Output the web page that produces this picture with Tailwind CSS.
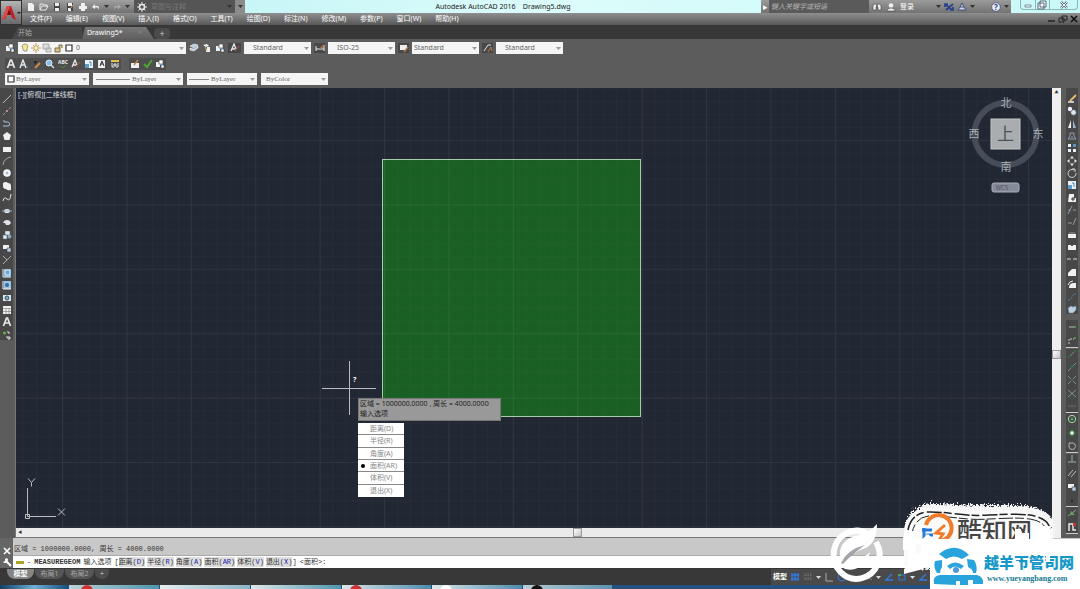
<!DOCTYPE html>
<html lang="zh-CN">
  <head>
    <meta charset="utf-8" />
    <meta name="viewport" content="width=device-width, initial-scale=1" />
    <title>Autodesk AutoCAD 2016 Drawing5.dwg</title>
    <script src="https://cdn.jsdelivr.net/npm/@tailwindcss/browser@4"></script>
  </head>
  <body
    class="relative flex h-screen flex-col overflow-hidden bg-[#5c5c5c] font-['Noto_Sans','Noto_Sans_CJK_SC',sans-serif] text-[7px] leading-[10px] text-gray-200"
  >
    <!-- title bar and menus -->
    <header class="flex h-[25px] shrink-0 bg-[#777]">
      <button
        aria-label="Application menu"
        class="flex w-[22px] shrink-0 items-center border border-[#333] bg-linear-to-b from-[#b5b5b5] to-[#6a6a6a]"
      >
        <svg class="h-[18px] w-4" viewBox="0 0 16 18">
          <path d="M1 16 6 2h4l5 14-4-2-1-3H6l-1 3z" fill="#bd2128" />
          <path d="M6 2h3l-2 9-6 5z" fill="#df4a45" />
          <path d="m8 5 2 6H6z" fill="#7b0d14" />
        </svg>
        <svg class="size-1" viewBox="0 0 4 4"><path d="M0 1h4L2 3z" fill="#222" /></svg>
      </button>
      <div class="flex min-w-0 flex-1 flex-col">
        <div class="flex h-[13px] bg-linear-to-r from-[#b9f1f4] via-[#dcfcfb] to-[#c9f9f8]">
          <div
            class="flex w-[112px] items-center justify-between bg-linear-to-b from-[#a0a0a0] to-[#717171] px-1"
            data-icons="new open save saveas print undo caret redo caret"
          ></div>
          <div class="flex w-[101px] items-center gap-1 bg-[#555] px-[3px] text-[#777]">
            <span data-icons="gear" class="flex"></span>
            <span class="flex-1">草图与注释</span>
            <span data-icons="caret" class="flex"></span>
          </div>
          <div class="flex w-[10px] items-center justify-center bg-[#8b8b8b]" data-icons="caret"></div>
          <h1 class="min-w-0 flex-1 whitespace-pre text-center leading-[13px] text-[#222]">Autodesk AutoCAD 2016    Drawing5.dwg</h1>
          <div class="flex w-[250px] items-center bg-linear-to-b from-[#9b9b9b] to-[#737373]">
            <span class="w-2 text-center text-[5px] text-white">▶</span>
            <input
              aria-label="搜索"
              placeholder="键入关键字或短语"
              class="h-full w-[100px] bg-[#5a5a5a] px-[2px] text-[7px] italic placeholder:text-[#b5b5b5]"
            />
            <div class="flex flex-1 items-center gap-1 px-[3px]">
              <span data-icons="find user" class="flex gap-1"></span>
              <button class="text-white">登录</button>
            </div>
            <div class="flex items-center gap-[3px] pr-[2px]" data-icons="caret exchange a360 caret blank help caret"></div>
          </div>
          <div class="flex w-[69px] items-start justify-end pr-[2px]">
            <div class="flex h-[10px] w-[58px] divide-x divide-[#8fb5bb] rounded-b border border-t-0 border-[#8fb5bb]">
              <button aria-label="Minimize" class="flex flex-1 items-center justify-center" data-icons="winmin"></button>
              <button aria-label="Restore" class="flex flex-1 items-center justify-center" data-icons="winmax"></button>
              <button aria-label="Close" class="flex flex-[2] items-center justify-center" data-icons="winclose"></button>
            </div>
          </div>
        </div>
        <nav class="flex h-3 items-center bg-linear-to-b from-[#8f8f8f] to-[#585858] pl-px text-white">
          <a href="#" class="px-[7px]">文件(F)</a>
          <a href="#" class="px-[7px]">编辑(E)</a>
          <a href="#" class="px-[7px]">视图(V)</a>
          <a href="#" class="px-[7px]">插入(I)</a>
          <a href="#" class="px-[7px]">格式(O)</a>
          <a href="#" class="px-[7px]">工具(T)</a>
          <a href="#" class="px-[7px]">绘图(D)</a>
          <a href="#" class="px-[7px]">标注(N)</a>
          <a href="#" class="px-[7px]">修改(M)</a>
          <a href="#" class="px-[7px]">参数(P)</a>
          <a href="#" class="px-[7px]">窗口(W)</a>
          <a href="#" class="px-[7px]">帮助(H)</a>
          <div class="ml-auto flex gap-px pr-px" data-icons="docmin docmax docclose"></div>
        </nav>
      </div>
    </header>

    <!-- drawing tabs -->
    <div class="flex h-[14px] shrink-0 items-end bg-[#383838] pl-3">
      <a href="#" class="flex h-3 w-[70px] items-center bg-[#484848] pl-[6px] text-[#aaa] [clip-path:polygon(6px_0,100%_0,100%_100%,0_100%)]">开始</a>
      <a
        href="#"
        class="flex h-3 w-[72px] items-center justify-between bg-linear-to-b from-[#777] to-[#606060] pl-[5px] pr-3 text-white [clip-path:polygon(3px_0,64px_0,100%_100%,0_100%)]"
        >Drawing5* <span class="text-[#8d8d8d]">×</span></a
      >
      <button class="h-[11px] w-4 rounded bg-[#4b4b4b] text-[9px] leading-[11px] text-[#ccc]" aria-label="新图形">+</button>
    </div>

    <!-- toolbars -->
    <section class="flex h-[49px] shrink-0 flex-col gap-[3px] pt-[3px] text-[#666]">
      <div class="flex h-3 items-center gap-[3px] pl-1">
        <span class="flex w-[11px] justify-center" data-icons="layers"></span>
        <div class="flex h-full w-[168px] items-center gap-px bg-[#f5f5f5] px-[2px]">
          <span class="flex gap-px" data-icons="bulb sun freeze unlock swatch"></span>
          <label class="relative flex flex-1 items-center">
            <select aria-label="图层" class="w-full appearance-none pl-px"><option>0</option></select>
            <span class="pointer-events-none absolute right-0" data-icons="dcaret"></span>
          </label>
        </div>
        <span class="flex gap-[3px]" data-icons="layer2 layer3 layers"></span>
        <span class="flex w-[13px] justify-center bg-[#484848]" data-icons="astyle"></span>
        <label class="relative flex h-full w-[67px] items-center bg-[#f5f5f5]">
          <select aria-label="文字样式" class="w-full appearance-none pl-[9px]"><option>Standard</option></select>
          <span class="pointer-events-none absolute right-[2px]" data-icons="dcaret"></span>
        </label>
        <span class="flex w-[11px] justify-center bg-[#484848]" data-icons="dim"></span>
        <label class="relative flex h-full w-[67px] items-center bg-[#f5f5f5]">
          <select aria-label="标注样式" class="w-full appearance-none pl-[9px]"><option>ISO-25</option></select>
          <span class="pointer-events-none absolute right-[2px]" data-icons="dcaret"></span>
        </label>
        <span class="flex w-[11px] justify-center bg-[#484848]" data-icons="tablestyle"></span>
        <label class="relative flex h-full w-[67px] items-center bg-[#f5f5f5]">
          <select aria-label="表格样式" class="w-full appearance-none pl-[2px]"><option>Standard</option></select>
          <span class="pointer-events-none absolute right-[2px]" data-icons="dcaret"></span>
        </label>
        <span class="flex w-[11px] justify-center bg-[#484848]" data-icons="mleader"></span>
        <label class="relative flex h-full w-[67px] items-center bg-[#f5f5f5]">
          <select aria-label="多重引线样式" class="w-full appearance-none pl-[9px]"><option>Standard</option></select>
          <span class="pointer-events-none absolute right-[2px]" data-icons="dcaret"></span>
        </label>
      </div>
      <div class="flex h-[13px] items-center gap-2 pl-[5px]">
        <div class="flex w-[116px] justify-between bg-[#4e4e4e] p-px" data-icons="bigA mtext brush zoom abc astyle scale justify convert"></div>
        <div class="flex w-[37px] justify-between bg-[#4e4e4e] p-px" data-icons="refedit check layers"></div>
      </div>
      <div class="flex h-3 items-center gap-1 pl-[5px] font-['Liberation_Serif',serif]">
        <label class="relative flex h-full w-[84px] items-center bg-[#f5f5f5] pl-px">
          <span data-icons="swatch" class="flex"></span>
          <select aria-label="颜色" class="flex-1 appearance-none"><option>ByLayer</option></select>
          <span class="pointer-events-none absolute right-[2px]" data-icons="dcaret"></span>
        </label>
        <label class="relative flex h-full w-[90px] items-center bg-[#f5f5f5] pl-[3px]">
          <span class="h-px w-[34px] bg-[#888]"></span>
          <select aria-label="线型" class="flex-1 appearance-none pl-[2px]"><option>ByLayer</option></select>
          <span class="pointer-events-none absolute right-[2px]" data-icons="dcaret"></span>
        </label>
        <label class="relative flex h-full w-[70px] items-center bg-[#f5f5f5] pl-[2px]">
          <span class="h-px w-5 bg-[#888]"></span>
          <select aria-label="线宽" class="flex-1 appearance-none pl-[2px]"><option>ByLayer</option></select>
          <span class="pointer-events-none absolute right-[2px]" data-icons="dcaret"></span>
        </label>
        <label class="relative flex h-full w-[67px] items-center bg-[#f5f5f5]">
          <select aria-label="打印样式" class="w-full appearance-none pl-[5px]"><option>ByColor</option></select>
          <span class="pointer-events-none absolute right-[2px]" data-icons="dcaret"></span>
        </label>
      </div>
    </section>

    <main class="flex min-h-0 flex-1">
      <!-- draw toolbar -->
      <aside class="w-4 shrink-0 border-r border-[#777]">
        <div
          class="mr-[2px] flex h-[252px] flex-col items-center justify-between bg-[#484848] pt-[6px]"
          data-icons="line xline pline polygon rect arc circle revcloud spline ellipse earc insert block point hatch gradient region table bigA addsel"
        ></div>
      </aside>

      <div class="flex min-w-0 flex-1 flex-col">
        <div class="relative flex-1 overflow-hidden bg-[#212833]">
          <svg class="absolute inset-0 size-full">
            <defs>
              <pattern id="minor" width="12.88" height="12.88" patternUnits="userSpaceOnUse" x="46" y="52">
                <path d="M.5 0v13M0 .5h13" stroke="#fff" stroke-opacity=".02" />
              </pattern>
              <pattern id="major" width="64.4" height="64.4" patternUnits="userSpaceOnUse" x="46" y="52">
                <path d="M.5 0v65M0 .5h65" stroke="#fff" stroke-opacity=".045" />
              </pattern>
            </defs>
            <rect x="366.5" y="71.5" width="258" height="257" fill="#1a5f23" stroke="#a3cda5" />
            <rect width="100%" height="100%" fill="url(#minor)" />
            <rect width="100%" height="100%" fill="url(#major)" />
            <!-- crosshair -->
            <path d="M306 300.5h54M333.5 273v54" stroke="#b9bcc1" />
            <!-- UCS icon -->
            <path d="M11.5 400v28.500H40M9.500 426.500h4v4h-4zM12 390.500l3.500 4 3.500-4M15.500 394.500v4M42 420.500l7 7M49 420.500l-7 7" fill="none" stroke="#b9bcc1" />
          </svg>
          <p class="absolute left-[2px] top-[2px] text-[#ddd]">[-][俯视][二维线框]</p>
          <span class="absolute left-[337px] top-[287px] font-bold text-white">?</span>
          <div class="absolute left-[342px] top-[310px] w-[143px] border border-[#777] bg-[#999] px-px pb-px text-[#222]">
            <p class="whitespace-nowrap">区域 = 1000000.0000 , 周长 = 4000.0000</p>
            <p>输入选项</p>
          </div>
          <div class="absolute left-[342px] top-[335px] grid h-[74px] w-[46px] grid-rows-6 divide-y divide-[#888] bg-white text-[#888]">
            <button class="pl-3 text-left leading-none">距离(D)</button>
            <button class="pl-3 text-left leading-none">半径(R)</button>
            <button class="pl-3 text-left leading-none">角度(A)</button>
            <button class="flex items-center gap-[5px] whitespace-nowrap pl-[3px] leading-none"><span class="size-1 rounded-full bg-black"></span>面积(AR)</button>
            <button class="pl-3 text-left leading-none">体积(V)</button>
            <button class="pl-3 text-left leading-none">退出(X)</button>
          </div>
          <!-- view cube -->
          <svg class="absolute right-1 top-1 h-[104px] w-[84px] font-['Noto_Sans_CJK_SC',sans-serif]" viewBox="0 0 84 104" text-anchor="middle">
            <circle cx="41.500" cy="42" r="31" fill="none" stroke="#474c59" stroke-width="6" />
            <rect x="27" y="27" width="29" height="30" fill="#a9adaf" stroke="#c2c5c6" />
            <text x="41.500" y="48" font-size="17" fill="#4b5359">上</text>
            <g font-size="11" fill="#a9adb3">
              <text x="42" y="15">北</text>
              <text x="42" y="79">南</text>
              <text x="10" y="46">西</text>
              <text x="74" y="46">东</text>
            </g>
            <rect x="28" y="91" width="27" height="9" rx="2" fill="#858b99" stroke="#a9aeb8" />
            <text x="38" y="98" font-size="6" fill="#4d525e">WCS</text>
          </svg>
        </div>
        <div class="flex h-[10px] items-center border-b border-[#777] bg-[#ebebeb]">
          <span class="w-2 text-center text-[4px] text-[#333]">◀</span>
          <span class="ml-[53%] size-[9px] border border-[#999] bg-linear-to-br from-white to-[#c5c5c5]"></span>
        </div>
      </div>

      <div class="flex w-[9px] shrink-0 flex-col items-center bg-[#efefef]">
        <span class="text-[4px] leading-[9px] text-[#333]">▲</span>
        <span class="mt-[253px] h-[9px] w-full border border-[#999] bg-linear-to-br from-white to-[#c5c5c5]"></span>
      </div>

      <!-- modify, object snap -->
      <aside class="flex w-[19px] shrink-0 flex-col pl-[5px] pr-[2px]">
        <div
          class="flex h-[226px] flex-col items-center justify-between bg-[#484848] pt-[6px]"
          data-icons="erase copy mirror offset array move rotate scale stretch trim extend break1 break2 join chamfer fillet blend explode"
        ></div>
        <div class="mt-[6px] flex h-[28px] flex-col items-center justify-between border-b border-[#ccc] bg-[#484848] py-[2px]" data-icons="track from"></div>
        <div class="mt-px flex h-[63px] flex-col items-center justify-between bg-[#484848] pb-px" data-icons="endp midp isect appint ext"></div>
        <div class="flex h-[41px] flex-col items-center justify-between border-y border-[#ccc] bg-[#484848] py-px" data-icons="center quad tangent"></div>
        <div class="mt-px flex h-[52px] flex-col items-center justify-between bg-[#484848]" data-icons="perp parallel block node"></div>
        <div class="flex h-[28px] flex-col items-center justify-between border-y border-[#ccc] bg-[#484848] py-px" data-icons="nearest magnet"></div>
      </aside>
    </main>

    <!-- command line -->
    <section class="flex h-[30px] shrink-0 font-['Liberation_Mono','Noto_Sans_CJK_SC',monospace] text-[#333]">
      <div class="flex w-[13px] flex-col items-center justify-end gap-px bg-[#666] pb-px" data-icons="cmdclose wrench"></div>
      <div class="flex min-w-0 flex-1 flex-col">
        <p class="flex-1 whitespace-pre border-b border-[#aaa] bg-[#c8c8c8] pl-px pt-[6px]">区域 = 1000000.0000, 周长 = 4000.0000</p>
        <div class="flex h-3 items-center gap-[3px] whitespace-nowrap bg-white pl-[3px]">
          <span class="h-[3px] w-2 bg-[#aaa52a]"></span>
          <span>-</span>
          <b>MEASUREGEOM</b>
          <span>输入选项</span>
          <span class="flex"
            >[<span class="flex gap-[2px]">
              <a href="#" class="bg-[#ddd]">距离(<span class="text-[#22a]">D</span>)</a>
              <a href="#" class="bg-[#ddd]">半径(<span class="text-[#22a]">R</span>)</a>
              <a href="#" class="bg-[#ddd]">角度(<span class="text-[#22a]">A</span>)</a>
              <a href="#" class="bg-[#ddd]">面积(<span class="text-[#22a]">AR</span>)</a>
              <a href="#" class="bg-[#ddd]">体积(<span class="text-[#22a]">V</span>)</a>
              <a href="#" class="bg-[#ddd]">退出(<span class="text-[#22a]">X</span>)</a> </span
            >]</span
          >
          <span>&lt;面积&gt;:</span>
          <input aria-label="命令" class="min-w-0 flex-1 outline-none" />
        </div>
      </div>
    </section>

    <!-- layout tabs and status bar -->
    <footer class="flex h-[17px] shrink-0 items-start bg-[#383838] pl-[7px] pt-px">
      <a href="#" class="w-[27px] rounded-b-lg bg-[#858585] text-center font-bold text-white">模型</a>
      <a href="#" class="ml-px w-[29px] rounded-b-lg bg-[#555] text-center text-[#aaa]">布局1</a>
      <a href="#" class="ml-px w-[29px] rounded-b-lg bg-[#555] text-center text-[#aaa]">布局2</a>
      <button class="ml-px w-[14px] rounded-b-lg bg-[#4d4d4d] text-[#ccc]" aria-label="新建布局">+</button>
      <div class="ml-auto flex h-4 w-[309px] items-center gap-[2px] bg-[#4a4a4a] pl-[2px]">
        <button class="font-bold text-white">模型</button>
        <span
          class="flex items-center gap-[3px] pl-px"
          data-icons="gridblue grid wcaret ortho polar blank iso wcaret angle osnap wcaret angle"
        ></span>
      </div>
    </footer>

    <!-- desktop taskbar -->
    <div class="flex h-1 shrink-0 gap-px overflow-hidden bg-[#24517f]">
      <span class="w-[68px] bg-linear-to-r from-[#123f66] via-[#6fb1d8] to-[#16517e]"></span>
      <span class="w-[90px] bg-linear-to-r from-[#bcd3d6] to-[#4b96ad] pl-3"><i class="block size-3 rounded-full bg-[#c33]"></i></span>
      <span class="w-[90px] bg-linear-to-r from-[#e7eef0] to-[#8bb3c4]"></span>
      <span class="w-[90px] bg-linear-to-r from-[#dfe8ea] to-[#4b96ad]"></span>
      <span class="w-[89px] bg-linear-to-r from-[#dfe8ea] to-[#4b8cad] pl-2"><i class="block size-3 rounded-full bg-[#c33]"></i></span>
      <span class="w-[90px] bg-linear-to-r from-[#dfe8ea] to-[#4b8cad] pl-2"><i class="block size-3 rounded-full bg-white"></i></span>
      <span class="w-[89px] bg-linear-to-r from-[#b9cdd4] to-[#5c93ae] pl-2"><i class="block size-3 rounded-full bg-[#111]"></i></span>
    </div>

    <!-- site logos over the corner -->
    <svg class="pointer-events-none absolute bottom-0 right-0 h-[94px] w-[254px] font-['Noto_Sans_CJK_SC',sans-serif]" viewBox="826 495 254 94">
      <defs>
        <filter id="rough" x="-10%" y="-20%" width="120%" height="140%">
          <feTurbulence baseFrequency=".7" numOctaves="2" result="n" />
          <feDisplacementMap in="SourceGraphic" in2="n" scale="9" />
        </filter>
      </defs>
      <path d="M904 566v-35c0-17 9-29 25-30 20 0 40 3 62 2s61-1 61 22v30H930v12z" fill="#f6f6f6" filter="url(#rough)" />
      <path d="M904 566v-33c0-15 9-24 25-25 20 0 40 3 62 2s59 2 61 20v27H930v9z" fill="#fafafa" />
      <path d="M908 530q3-16 19-18c18-1 36 5 62 3 25-1 58-4 61 14" fill="none" stroke="#222" stroke-width="1.500" stroke-dasharray="15 2 8 3" />
      <path d="M912 533q3-15 16-17c19-1 37 5 61 3 24-1 54-4 57 11" fill="none" stroke="#222" stroke-dasharray="9 3 14 2" />
      <path d="M926 525a13 13 0 1 1 14 16" fill="none" stroke="#f07b2b" stroke-width="4" />
      <path d="M922 530h10M924 528v13q4 8 12 7M928 543v-8h5" fill="none" stroke="#2778d8" stroke-width="3" />
      <path d="m945 525-9 8 7 1-4 6" fill="none" stroke="#f07b2b" stroke-width="3" />
      <text x="957" y="541" font-size="25" font-weight="500" fill="#444">酷知网</text>
      <path d="M905 531h10v8h9v5h-8l-1 10 8-2v17l-19 5v-5l4-3v-16h-5v-12zM920 541l8-7 5 5h20v8l-18 4-4 16h-8z" fill="#fff" />
      <path d="M1015 529h6v4h8v6h-14zM1031 526h19v14h-19z" fill="#fff" />
      <!-- leaf badge -->
      <path d="M868 534a23 24 0 1 0 8 8" fill="none" stroke="#fff" stroke-width="6" />
      <path d="M840 558q-2-17 15-22 14-2 22-12 0 18-11 24-14 3-23 17z" fill="#fff" />
      <path d="M841 563q7-14 24-18-14 10-22 19z" fill="#444a52" opacity=".5" />
      <path d="M841 567q10-3 16-9 9-1 13-6-3 14-15 17-8 2-14-2z" fill="#fff" />
      <path d="M930 539h150v50H930z" fill="#fff" />
      <path d="M934 584q-2-8 6-9h37q7 2 6 9h-10v-4h-5v5h-8v-4h-4v4z" fill="#28a3dc" />
      <path d="M939 554q16-13 30 1l-7 4q-8-5-16 0zM935 561l7-1v7q-2 3-2 6h-3q-4-6-2-12zM967 559l7 1q4 6 2 13h-3q0-4-5-6zM947 566q8-7 17 0l-3 3q-6-5-11 0z" fill="#28a3dc" />
      <circle cx="956" cy="570" r="3" fill="#4b9bdc" />
      <text x="984" y="568" font-size="15" font-weight="900" fill="#1598c8">越羊帀管司网</text>
      <path d="M1014 561h5v12h-5zM1035 570h20v3h-20zM1046 555h4v6h-4z" fill="#fff" />
      <text x="987" y="581" font-size="8" font-weight="700" font-family="Liberation Serif, serif" fill="#147a92">www.yueyangbang.com</text>
    </svg>

    <script>
      const W = 'stroke="#e4e7ea" fill="none"';
      const F = 'fill="#eef0f2"';
      // 10x10 toolbar glyphs
      const icons = {
        new: `<path d="M2 1h4l2 2v6H2z" ${F}/>`,
        open: `<path d="M1 8V2h3l1 1h3v2M1 8l2-4h6L7 8z" ${W}/>`,
        save: `<path d="M2 1h6v8H2z" fill="#444"/><path d="M3 1h4v3H3zM3 6h4v3H3z" ${F}/>`,
        saveas: `<path d="M2 1h6v8H2z" fill="#444"/><path d="M3 1h4v3H3zM3 6h3v3H3z" ${F}/><path d="m5 7 4-5" stroke="#e0a050"/>`,
        print: `<path d="M3 1h4v3H3zM1 4h8v3H1zM3 7h4v2H3z" ${F}/>`,
        undo: `<path d="m4 2-3 3 3 2V5.500h3l1 2.500V5L7 4H4z" ${F}/>`,
        redo: `<path d="m6 2 3 3-3 2V5.500H3L2 8V5l1-1h3z" fill="#aaa"/>`,
        gear: `<circle cx="5" cy="5" r="2.500" ${W} stroke-width="1.500"/><path d="M5 0v2M5 8v2M0 5h2M8 5h2M1.500 1.500l1.500 1.500M7 7l1.500 1.500M8.500 1.500 7 3M3 7 1.500 8.500" ${W}/>`,
        find: `<path d="M1 8V4l1-2h2l1 3 1-3h2l1 2v4H6V5H4v3z" fill="#eee" stroke="#444" stroke-width=".6"/>`,
        user: `<circle cx="5" cy="3.500" r="2.300" ${F}/><path d="M1 9q0-3 4-3t4 3z" fill="#eee" stroke="#444" stroke-width=".6"/>`,
        exchange: `<path d="m1 2 7 6M9 2 2 8M1 5V2h3M9 5v3H6" stroke="#27418d" stroke-width="1.700" fill="none"/>`,
        a360: `<path d="m5 1 2 4H3zM3 5 1 8h8L7 5" fill="#ccd5e8" stroke="#415078"/>`,
        help: `<circle cx="5" cy="5" r="4.300" fill="#e8ecf7" stroke="#3c4b78" stroke-width=".7"/><text x="5" y="8" font-size="8" font-weight="700" text-anchor="middle" fill="#2b3f85">?</text>`,
        winmin: '<path d="M2 5h6v2H2z" fill="#fff" stroke="#678" stroke-width=".8"/>',
        winmax: '<path d="M3 1h6v6H3zM1 3h6v6H1z" fill="#fff" stroke="#567"/>',
        winclose: '<path d="m2 2 6 6M8 2 2 8" stroke="#567" stroke-width="2.400"/><path d="m2 2 6 6M8 2 2 8" stroke="#fff"/>',
        docmin: '<path d="M1 7h7" stroke="#222" stroke-width="1.500"/>',
        docmax: '<path d="M4 2h5v4H4zM1 4h5v4H1z" fill="none" stroke="#222"/>',
        docclose: '<path d="m2 2 6 6M8 2 2 8" stroke="#111" stroke-width="1.600"/>',
        layers: `<path d="M1 3h4v5H1z" ${F}/><path d="M4 1h4v4H4zM6 6h3v3H6z" fill="#fff" stroke="#444" stroke-width=".6"/><path d="M5 5h3v1H5z" fill="#69c"/>`,
        layer2: `<path d="m1 3 4-2 4 1-4 3zM1 5l4 1 4-3v2L5 8 1 7z" fill="#b9d2e5" stroke="#fff" stroke-width=".5"/>`,
        layer3: `<path d="m1 2 4-1 2 2-3 1zM5 4h3v2H5zM4 6h4v3H4z" ${F}/><path d="m3 4 2 4" stroke="#cfa765"/>`,
        bulb: '<path d="M3 6Q1 1 5 1t2 5v2H4z" fill="#fae987" stroke="#777" stroke-width=".7"/>',
        sun: '<circle cx="5" cy="5" r="2.200" fill="#fff6bf" stroke="#b99a4e"/><path d="M5 0v2M5 8v2M0 5h2M8 5h2M2 2l1 1M7 7l1 1M8 2 7 3M3 7 2 8" stroke="#b99a4e"/>',
        freeze: '<path d="M1 1h6v5H1zM4 5h5v4H4z" fill="#ddd" stroke="#aaa"/>',
        unlock: '<path d="M2 5h5v4H2zM6 5V2h3v3" fill="#dcc58a" stroke="#776a48"/>',
        swatch: '<path d="M2 2h6v6H2z" fill="#fff" stroke="#333" stroke-width="1.200"/>',
        astyle: `<path d="m1 8 3-7 2 5M2 6h3" ${W} stroke-width="1.300"/><path d="m5 8 4-5" stroke="#b5563e"/>`,
        dim: `<path d="M1 3v5M9 2v6M1 6h8" ${W}/><path d="m5 6 4-4" stroke="#b77a4c" stroke-width="1.500"/>`,
        tablestyle: `<path d="M1 2h7v5H1z" ${F}/><path d="m5 9 4-5" stroke="#b77a4c" stroke-width="1.500"/>`,
        mleader: `<path d="m1 8 4-6h3" ${W}/><path d="m5 9 3-5 1 4" stroke="#b77a4c" fill="none"/>`,
        bigA: `<path d="m1.500 9 3-8h1l3 8M3 6h4" ${W} stroke-width="1.700"/>`,
        mtext: `<path d="m1 9 3-8 3 8M2.500 6h3" ${W} stroke-width="1.400"/><path d="M7 8h2" stroke="#59d"/>`,
        brush: '<path d="M2 2h3l-2 4z" fill="#222"/><path d="m3 9 5-5" stroke="#c98a4a" stroke-width="2"/>',
        zoom: '<circle cx="4" cy="4" r="3" fill="#87bfe8" stroke="#dceaf5"/><path d="m6 6 3 3" stroke="#ddd" stroke-width="1.500"/>',
        abc: '<text x="0" y="5" font-size="5" font-weight="700" fill="#eee">ABC</text><path d="m3 7 2 2 3-3" stroke="#4c8b43" fill="none"/>',
        scale: '<path d="M1 1h8v8H1z" fill="#e8f1f8"/><path d="M1 5h4v4H1z" fill="#5b9bc8"/><path d="M5 3h2v4" stroke="#4e87ae" fill="none"/>',
        justify: `<path d="M1 1h7v8H1z" ${F}/><path d="m3 7 2-5 2 5M3 5h3" stroke="#333" fill="none"/>`,
        convert: `<path d="M1 1h8v2H1z" fill="#e4c04f"/><path d="M2 4v4h2M8 4v4H6M4 5h2v2H4z" ${W}/>`,
        refedit: `<path d="M1 4h8v5H1z" ${F}/><path d="m4 6 4-5" stroke="#c98a4a" stroke-width="1.500"/>`,
        check: '<path d="m1 5 3 3 5-7" stroke="#4da82f" stroke-width="2" fill="none"/>',
        line: `<path d="m1 9 8-8" stroke="#b5b5b5"/>`,
        xline: '<path d="m1 9 8-8" stroke="#999" stroke-dasharray="3 1"/><circle cx="5" cy="5" r="1" fill="#d99"/>',
        pline: '<path d="M1 7h6q2-3-1-4H2V1" stroke="#a9c0d8" fill="none"/>',
        polygon: `<path d="m5 1 4 3-1.500 5h-5L1 4z" ${F}/>`,
        rect: `<path d="M1 3h8v5H1z" ${F}/>`,
        arc: '<path d="M1 9q1-7 8-8" stroke="#aaa" fill="none"/>',
        circle: '<circle cx="5" cy="5" r="3.800" fill="#f3f6fa"/><circle cx="5" cy="5" r="1.500" fill="#a8bdd2"/>',
        revcloud: `<path d="M1 2q3-2 5 0 3 0 3 3v4q-3 1-5-1-3 0-3-3z" ${F}/>`,
        spline: `<path d="M1 8q1-5 4-2t4-5" ${W}/>`,
        ellipse: '<ellipse cx="5" cy="5" rx="3" ry="2" fill="#e8edf2"/><path d="M0 5h10" stroke="#9ab"/>',
        earc: '<path d="M1 5q1-3 4-3t4 3L7 7H4L3 5z" fill="#dfe4ea"/>',
        insert: '<path d="M1 5h4v4H1zM3 1h5v4H3z" fill="#dfe8f0" stroke="#567" stroke-width=".5"/><circle cx="7.500" cy="6.500" r="2" fill="#8ab"/>',
        block: `<path d="M1 2h6v4H1z" ${F}/><path d="M5 5h4v4H5z" fill="#b9c9d9" stroke="#345" stroke-width=".6"/>`,
        point: '<path d="m1 1 4 4 4-4M5 5 1 9" stroke="#aaa" fill="none"/>',
        hatch: '<path d="M2 1h7v8H2z" fill="#6aa6d8"/><path d="M1 1v8h8M3 2h5v5H3z" stroke="#e6f0f8" fill="none"/>',
        gradient: '<path d="M2 1h7v8H2z" fill="#9cc3e4"/><path d="M1 1v8h8" stroke="#eef" fill="none"/><circle cx="5" cy="5" r="2" fill="#2f6da5"/>',
        region: '<path d="M1 2h8v6H1z" fill="#dce8f2"/><circle cx="5" cy="5" r="2" fill="#7fa7c6" stroke="#356"/>',
        table: `<path d="M1 1h8v8H1z" ${F}/><path d="M1 3.500h8M1 6.500h8M4 3v6M7 3v6" stroke="#777" stroke-width=".6"/>`,
        addsel: '<circle cx="2.500" cy="3" r="1.500" fill="#6ab04e"/><path d="M5 2h2v2M4 7h2M7 6v4M5 8h4" stroke="#ddd" fill="none"/>',
        erase: '<path d="m3 7 6-6" stroke="#e6b877" stroke-width="2"/><path d="M1 8h6" stroke="#eee" stroke-width="1.500"/>',
        copy: '<circle cx="3" cy="3" r="2.200" fill="#eef"/><circle cx="6.500" cy="6.500" r="2.700" fill="#dde6ee" stroke="#567" stroke-width=".6"/>',
        mirror: '<path d="M4 1v8H1z" fill="#eee"/><path d="M6 1v8h3z" fill="#9fb4c8"/>',
        offset: '<path d="M1 8h8L7 5V2H3v3zM4 6h2" stroke="#8fa0b2" fill="none"/>',
        array: '<path d="M1 1h3v3H1zM1 6h3v3H1zM6 6h3v3H6z" fill="#e7eef5"/><path d="M6 1h3v3H6z" fill="#5f93c8"/>',
        move: '<path d="m5 0 2 2.500H3zM5 10l2-2.500H3zM0 5l2.500-2v4zM10 5 7.500 3v4z" fill="#e8ebee"/>',
        rotate: '<path d="M7 2a4 4 0 1 0 2 3M5 1h3v3" stroke="#d0d4d8" fill="none"/>',
        stretch: `<path d="M2 1h5v4h2v4H1z" ${F}/><path d="M4 6h4M6 4v4" stroke="#333"/>`,
        trim: '<path d="m1 9 4-8M1 5h3M6 5h3" stroke="#8e9aa6" fill="none"/>',
        extend: '<path d="M1 6h4M6 8l3-7" stroke="#8e9aa6" fill="none"/>',
        break1: `<path d="M1 4h8v4H1z" ${F}/><path d="M2 3h6" stroke="#89a"/>`,
        break2: `<path d="M1 3h3v1h2V3h3v5H1z" ${F}/>`,
        join: '<path d="M0 5h4M6 5h4" stroke="#a5abb1" stroke-width="1.500"/>',
        chamfer: `<path d="M1 9V6l4-4h4v7z" ${F}/>`,
        fillet: `<path d="M2 9q0-5 5-5h2v5z" ${F}/><path d="M1 6q1-4 5-4" ${W}/>`,
        blend: '<path d="M1 8q3 0 4-3t4-3" stroke="#5987a8" fill="none" stroke-dasharray="2 1"/>',
        explode: '<path d="m1 4 3-2 2 1 3-1v4L6 9H2z" fill="#bdd0e2" stroke="#6b8aa8" stroke-width=".6"/>',
        track: '<path d="M2 5h5" stroke="#bbb"/><circle cx="8" cy="5" r="1" fill="#5a5"/>',
        from: '<path d="M2 9V4h5" stroke="#ccc" fill="none" stroke-dasharray="2 1"/><circle cx="8" cy="3" r="1" fill="#5a5"/>',
        endp: '<path d="m2 8 6-6" stroke="#888"/><path d="M1 7h2v2H1zM7 1h2v2H7z" fill="#34703c"/>',
        midp: '<path d="m1 9 8-8" stroke="#888"/><path d="m5 3 2 3H3z" fill="#34703c"/>',
        isect: '<path d="m1 1 8 8M9 1 1 9" stroke="#888"/><path d="M4 4h2v2H4z" fill="#34703c"/>',
        appint: '<path d="m1 2 8 7M9 2 1 9" stroke="#7a9a7e"/>',
        ext: '<path d="M1 5h8" stroke="#7c7c7c" stroke-dasharray="2 1"/>',
        center: '<circle cx="5" cy="5" r="3.700" fill="none" stroke="#a9d3ae"/><circle cx="5" cy="5" r="1.500" fill="#4ba657"/>',
        quad: '<path d="m5 1 4 4-4 4-4-4z" fill="#387a43"/><path d="M3.500 3.500h3v3h-3z" fill="#fff"/>',
        tangent: '<path d="M2 2h4a3.300 3.300 0 1 1-4 4z" fill="none" stroke="#b5b5b5"/>',
        perp: '<path d="M1 8h8M5 1v7" stroke="#aaa"/><circle cx="5" cy="7" r="1" fill="#4a5"/>',
        parallel: '<path d="m1 8 5-6M4 9l5-6" stroke="#bbb"/>',
        node: '<circle cx="5" cy="5" r="1.300" fill="#2d2d2d"/>',
        nearest: '<path d="m1 8 8-6" stroke="#999"/><path d="m4 3 4 4H3z" fill="#5aa566"/>',
        magnet: '<path d="M2 9V2h4v6h3" fill="none" stroke="#e8e8e8" stroke-width="1.500"/><path d="M6 1h3v3H6z" fill="#c0392b"/>',
        cmdclose: '<path d="m2 2 6 6M8 2 2 8" stroke="#fff" stroke-width="1.600"/>',
        wrench: '<path d="m4 4 5 5" stroke="#fff" stroke-width="2"/><path d="M5 1a2.500 2.500 0 1 1-4 4l2-1V2z" fill="#fff"/>',
        gridblue: '<path d="M2 1v8M5 1v8M8 1v8M1 3h8M1 7h8" stroke="#2f7be0" stroke-width="1.300"/>',
        grid: '<path d="M2 1v8M5 1v8M8 1v8M1 3h8M1 7h8" stroke="#777" stroke-dasharray="1 1"/>',
        ortho: '<path d="M2 1v8h7" stroke="#aaa" fill="none"/>',
        polar: '<circle cx="5" cy="5" r="4" stroke="#2f7be0" fill="none"/>',
        iso: '<path d="m1 8 8-6M1 2l8 6" stroke="#888"/>',
        angle: '<path d="M1 8h8M2 8l6-6" stroke="#2f7be0" stroke-width="1.300"/>',
        osnap: '<path d="M2 3h6v5H2z" stroke="#2f7be0" fill="none"/><path d="M1 2h3v2H1z" fill="#4a5"/>',
        blank: '',
      };
      const carets = { caret: '#333', dcaret: '#999', wcaret: '#ddd' };

      document.querySelectorAll('[data-icons]').forEach((el) => {
        el.innerHTML += el.dataset.icons
          .split(' ')
          .map((name) =>
            carets[name]
              ? `<svg class="h-[3px] w-[5px]" viewBox="0 0 5 3"><path d="M0 0h5L2.500 3z" fill="${carets[name]}"/></svg>`
              : `<svg class="size-[10px] shrink-0" viewBox="0 0 10 10">${icons[name]}</svg>`
          )
          .join('');
      });
    </script>
  </body>
</html>
